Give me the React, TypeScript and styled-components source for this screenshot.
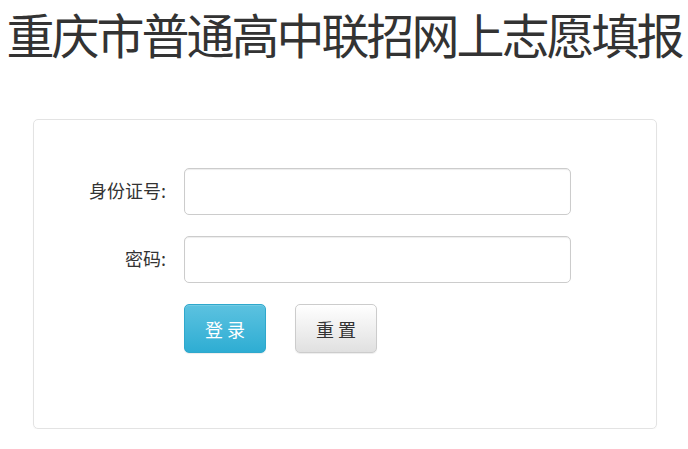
import React from "react";
import styled, { createGlobalStyle } from "styled-components";

const GlobalStyle = createGlobalStyle`
  html, body {
    margin: 0;
    padding: 0;
    background: #fff;
  }

  body {
    font-family: "Noto Sans CJK SC", "Liberation Sans", sans-serif;
    color: #333;
  }
`;

const StyledPage = styled.div`
  width: 688px;
`;

const StyledTitle = styled.h1`
  width: max-content;
  margin: 0 auto 52px;
  font-size: 48px;
  line-height: 67px;
  font-weight: 400;
  letter-spacing: -3px;
  color: #333;
  white-space: nowrap;
`;

const StyledPanel = styled.div`
  box-sizing: border-box;
  width: 624px;
  height: 310px;
  margin-left: 33px;
  padding: 48px 0 0;
  border: 1px solid #e3e3e3;
  border-radius: 5px;
  box-shadow: 0 1px 1px rgba(0, 0, 0, 0.04);
`;

const StyledForm = styled.form`
  display: grid;
  grid-template-columns: 150px 387px;
  row-gap: 21px;
  align-items: center;
`;

const StyledLabel = styled.label`
  padding: 0 18px 3px 0;
  text-align: right;
  font-size: 18px;
  color: #333;
  white-space: nowrap;
`;

const StyledInput = styled.input`
  box-sizing: border-box;
  width: 387px;
  height: 47px;
  padding: 6px 12px;
  border: 1px solid #ccc;
  border-radius: 5px;
  box-shadow: inset 0 1px 1px rgba(0, 0, 0, 0.075);
  font-size: 16px;
  outline: none;
`;

const StyledActions = styled.div`
  grid-column: 2;
  display: flex;
  gap: 29px;
`;

const StyledButton = styled.button<{ $primary?: boolean }>`
  box-sizing: border-box;
  width: 82px;
  height: 49px;
  padding: 0 0 0 4px;
  border: 1px solid ${(p) => (p.$primary ? "#2fa8cc" : "#ccc")};
  border-radius: 5px;
  background: ${(p) =>
    p.$primary
      ? "linear-gradient(to bottom, #5cc2e0 0%, #2eadd3 100%)"
      : "linear-gradient(to bottom, #fff 0%, #e0e0e0 100%)"};
  box-shadow: inset 0 1px 0 rgba(255, 255, 255, 0.15),
    0 1px 1px rgba(0, 0, 0, 0.075);
  color: ${(p) => (p.$primary ? "#fff" : "#333")};
  font-family: "Noto Sans CJK SC", sans-serif;
  font-size: 18px;
  letter-spacing: 4px;
  cursor: pointer;
`;

export default function App() {
  return (
    <StyledPage>
      <GlobalStyle />
      <StyledTitle>重庆市普通高中联招网上志愿填报</StyledTitle>
      <StyledPanel>
        <StyledForm onSubmit={(e) => e.preventDefault()}>
          <StyledLabel htmlFor="idcard">身份证号:</StyledLabel>
          <StyledInput id="idcard" type="text" />
          <StyledLabel htmlFor="pwd">密码:</StyledLabel>
          <StyledInput id="pwd" type="password" />
          <StyledActions>
            <StyledButton type="submit" $primary>
              登录
            </StyledButton>
            <StyledButton type="reset">重置</StyledButton>
          </StyledActions>
        </StyledForm>
      </StyledPanel>
    </StyledPage>
  );
}
